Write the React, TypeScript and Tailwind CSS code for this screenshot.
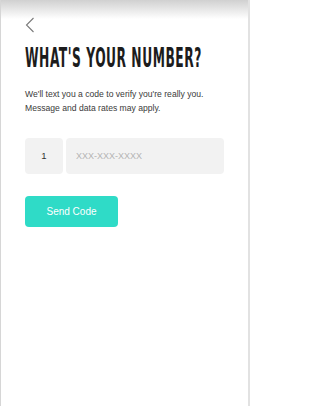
import { useState } from "react";

export default function App() {
  const [phone, setPhone] = useState("");

  return (
    <div className="w-[250px] h-[406px] overflow-hidden border-l border-r-2 border-l-[#d6d6d6] border-r-[#e2e2e2] bg-[linear-gradient(to_bottom,#d0d0d0_0px,#ffffff_19px)] pl-6 pr-6 pt-[17px] font-['Liberation_Sans',Arial,sans-serif]">
      <button type="button" className="block h-[16px] w-[10px] text-[#7a7a7a]" aria-label="Back">
        <svg width="10" height="16" viewBox="0 0 10 16" fill="none">
          <polyline points="8.5,1 1.5,8 8.5,15" stroke="currentColor" strokeWidth="1.1" />
        </svg>
      </button>

      <h1 className="mt-[12px] h-[26px] whitespace-nowrap">
        <span className="inline-block origin-left scale-x-[0.525] font-['DejaVu_Sans_Condensed','DejaVu_Sans',sans-serif] text-[26px] font-bold leading-none tracking-[1px] text-[#1c1c1c]">
          WHAT'S YOUR NUMBER?
        </span>
      </h1>

      <p className="mt-[16px] text-[8.6px] leading-[14px] text-[#3a3a3a]">
        We'll text you a code to verify you're really you.
        <br />
        Message and data rates may apply.
      </p>

      <div className="mt-[23px] flex gap-[3px]">
        <div className="flex h-[36px] w-[38px] items-center justify-center rounded-[4px] bg-[#f2f2f2] text-[9.5px] text-[#333]">
          1
        </div>
        <input
          value={phone}
          onChange={(event) => setPhone(event.target.value)}
          placeholder="XXX-XXX-XXXX"
          className="h-[36px] w-[158px] rounded-[4px] bg-[#f2f2f2] px-[10px] text-[9px] text-[#333] outline-none placeholder:text-[#b4b4b4]"
        />
      </div>

      <button
        type="button"
        className="mt-[22px] flex h-[31px] w-[93px] items-center justify-center rounded-[4px] bg-[#2fdbc7] text-[10px] text-white"
      >
        Send Code
      </button>
    </div>
  );
}
